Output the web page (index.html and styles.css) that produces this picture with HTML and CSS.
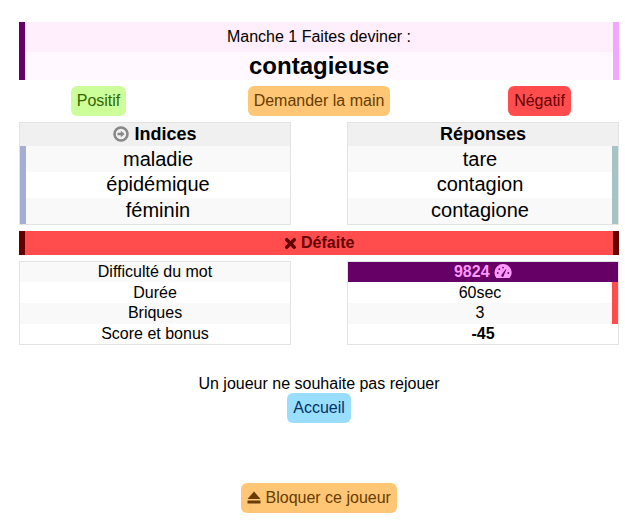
FILE: index.html
```html
<!DOCTYPE html>
<html lang="fr">
<head>
<meta charset="utf-8">
<title>Manche 1</title>
<link rel="stylesheet" href="styles.css">
</head>
<body>
<main class="page">
  <section class="banner">
    <div class="banner-top">Manche 1 Faites deviner :</div>
    <div class="banner-word">contagieuse</div>
  </section>
  <div class="actions">
    <a class="btn btn-green">Positif</a>
    <a class="btn btn-orange">Demander la main</a>
    <a class="btn btn-red">Négatif</a>
  </div>
  <div class="columns">
    <section class="card">
      <div class="card-head"><svg class="icon-arrow" viewBox="0 0 16 16"><circle cx="8" cy="8" r="6.500" fill="none" stroke="#888" stroke-width="2.600"/><path d="M4.500 6.800h3.300V4.700L11.600 8 7.800 11.300V9.200H4.500z" fill="#888"/></svg> Indices</div>
      <div class="list bar-left">
        <div class="row">maladie</div>
        <div class="row">épidémique</div>
        <div class="row">féminin</div>
      </div>
    </section>
    <section class="card">
      <div class="card-head">Réponses</div>
      <div class="list bar-right">
        <div class="row">tare</div>
        <div class="row">contagion</div>
        <div class="row">contagione</div>
      </div>
    </section>
  </div>
  <div class="result"><svg class="icon-x" viewBox="0 0 12 12"><path d="M2.500 2.500l7 7M9.500 2.500l-7 7" fill="none" stroke="#660000" stroke-width="3.200" stroke-linecap="round"/></svg> Défaite</div>
  <div class="columns">
    <section class="stats">
      <div class="stat">Difficulté du mot</div>
      <div class="stat stat-low">Durée</div>
      <div class="stat">Briques</div>
      <div class="stat">Score et bonus</div>
    </section>
    <section class="stats">
      <div class="stat stat-level">9824 <svg class="icon-gauge" viewBox="0 0 18 16"><path d="M9 1A8.500 8.500 0 0 0 .5 9.500c0 2 .6 3.800 1.700 5.200.2.300.5.400.8.400h12c.3 0 .6-.1.800-.4A8.500 8.500 0 0 0 9 1z" fill="#ff99ff"/><g fill="#660066"><circle cx="3.700" cy="10" r=".9"/><circle cx="5.300" cy="6.200" r=".9"/><circle cx="9" cy="4.600" r=".9"/><circle cx="14.300" cy="10" r=".9"/><path d="M8 11.300 11.700 6.300l.6.300-2.400 5.700A1.300 1.300 0 1 1 8 11.300z"/></g></svg></div>
      <div class="stat-bar">
        <div class="stat stat-low">60sec</div>
        <div class="stat">3</div>
      </div>
      <div class="stat stat-score">-45</div>
    </section>
  </div>
  <p class="message">Un joueur ne souhaite pas rejouer</p>
  <div class="center"><a class="btn btn-blue">Accueil</a></div>
  <div class="center block-row"><a class="btn btn-orange"><svg class="icon-eject" viewBox="0 0 14 13"><path d="M7 .5 13.500 8H.5zM.5 9.500h13V12.500H.5z" fill="#663c00"/></svg> Bloquer ce joueur</a></div>
</main>
</body>
</html>
```
FILE: styles.css
```css
* { box-sizing: border-box; }
html, body { margin: 0; padding: 0; background: #fff; }
body { font-family: "Liberation Sans", Arial, sans-serif; font-size: 16px; color: #000; }
.page { padding: 22px 6px 0 19px; }

.banner { border-left: 6px solid #660066; border-right: 6px solid #f3a6ff; text-align: center; }
.banner-top { height: 30px; line-height: 30px; background: #ffeefb; }
.banner-word { height: 28px; line-height: 28px; background: #fff8fe; font-size: 24px; font-weight: 700; }

.actions { display: grid; grid-template-columns: 159px 1fr 159px; justify-items: center; margin-top: 6px; }
.btn { display: inline-block; height: 30px; line-height: 30px; padding: 0 6px; border-radius: 6px; }
.btn-green { background: #ccff99; color: #336600; }
.btn-orange { background: #ffc675; color: #663c00; }
.btn-red { background: #ff4d4d; color: #660000; }
.btn-blue { background: #99ddff; color: #003366; }

.columns { display: grid; grid-template-columns: 272px 272px; justify-content: space-between; }
.actions + .columns { margin-top: 6px; }

.card { border: 1px solid #e3e3e3; height: 103px; }
.card-head { height: 23px; line-height: 23px; background: #f0f0f0; text-align: center; font-size: 18px; font-weight: 700; }
.list { font-size: 20px; text-align: center; }
.bar-left { border-left: 6px solid #a6aed1; }
.bar-right { border-right: 6px solid #a6c3c6; }
.row { height: 26px; line-height: 26px; }
.row + .row { line-height: 24px; }
.row:nth-child(odd) { background: #f9f9f9; }
.row:nth-child(even) { background: #fff; }

.result { height: 24px; line-height: 24px; margin-top: 6px; background: #ff4d4d; border-left: 6px solid #660000; border-right: 6px solid #660000; color: #660000; text-align: center; font-weight: 700; }
.result + .columns { margin-top: 6px; }

.stats { border: 1px solid #e3e3e3; height: 84px; text-align: center; }
.stat { height: 21px; line-height: 20px; }
.stat.stat-low { line-height: 22px; }
.stats > .stat:first-child { height: 20px; }
.stats > .stat:last-child { height: 20px; }
.stats > .stat:nth-child(odd) { background: #f9f9f9; }
.stat-bar { border-right: 6px solid #ff4d4d; }
.stat-bar .stat:nth-child(even) { background: #f9f9f9; }
.stats > .stat.stat-level { background: #660066; color: #ff99ff; font-weight: 700; }
.stats > .stat.stat-score { background: #fff; font-weight: 700; }

.message { margin: 29px 0 0; height: 19px; line-height: 19px; text-align: center; }
.center { text-align: center; margin-top: 0; }
.center .btn { vertical-align: top; }
.block-row { margin-top: 60px; }

.icon-arrow { width: 16px; height: 16px; vertical-align: -2px; }
.icon-x { width: 13px; height: 13px; vertical-align: -2px; }
.icon-gauge { width: 18px; height: 16px; vertical-align: -2px; }
.icon-eject { width: 14px; height: 13px; vertical-align: -1px; }
```
